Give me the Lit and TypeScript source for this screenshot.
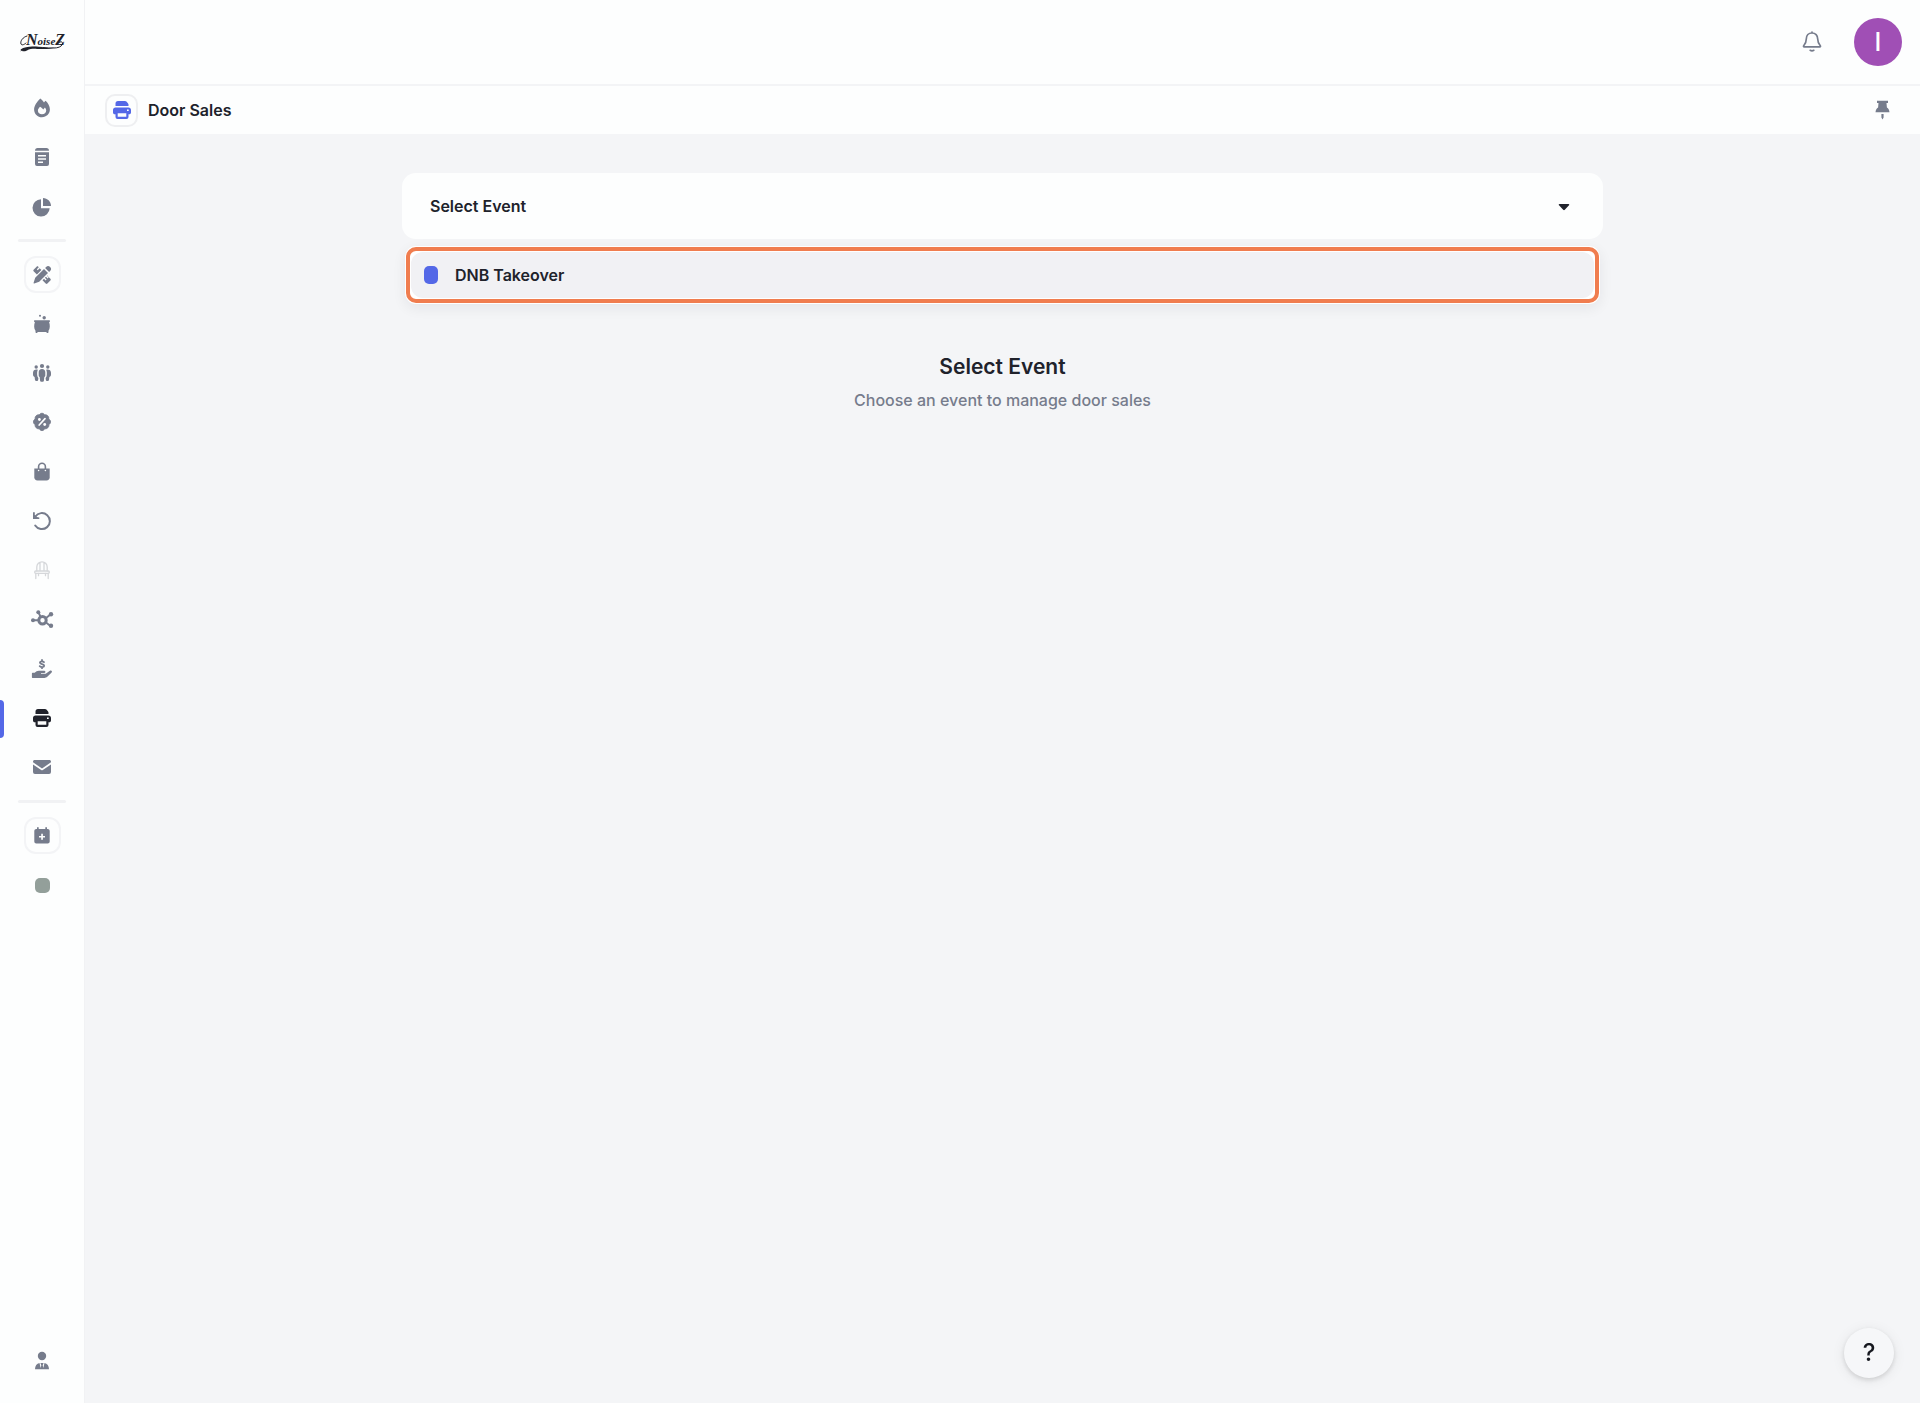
import { LitElement, html, svg, css, nothing, type SVGTemplateResult } from "lit";
import { customElement, property, state } from "lit/decorators.js";
import { classMap } from "lit/directives/class-map.js";

const ICONS: Record<string, SVGTemplateResult> = {
  flame: svg`<path fill="currentColor" fill-rule="evenodd" d="M8.300.5C10 1.700 11.200 3 12 4.600c.500-.800 1-1.400 1.600-1.800C16 5 17.900 8.300 17.900 11.300c0 4.500-3.500 7.900-7.900 7.900s-7.900-3.400-7.900-7.800C2.100 8 5 3.700 8.300.5ZM8 8.800C6.800 10 5.900 11.300 5.900 12.700c0 2.200 1.800 3.600 4.100 3.600 2.400 0 4.200-1.500 4.200-3.700 0-1.200-.5-2.200-1.300-3.100l-1.600 2C10.500 10.500 9.200 9.500 8 8.800Z"/>`,
  doc: svg`<path fill="currentColor" d="M5.500 1h9c1.500 0 2.500 1 2.500 2.800H3C3 2 4 1 5.500 1Z"/><path fill="currentColor" fill-rule="evenodd" d="M3 5.300h14V17a2 2 0 0 1-2 2H5a2 2 0 0 1-2-2V5.300ZM6 8v1.500h8V8H6Zm0 3.200v1.500h8v-1.500H6Zm0 3.200v1.500h5v-1.500H6Z"/>`,
  pie: svg`<path fill="currentColor" d="M9 2.300v9h8.700A8.600 8.600 0 1 1 9 2.300Z"/><path fill="currentColor" d="M11 .9c4.400.1 7.900 3.500 8 8H11V.9Z"/>`,
  tools: svg`<path fill="currentColor" d="m12 4 4 4-8.800 8.800-5 1.600a.5.500 0 0 1-.6-.6l1.600-5L12 4ZM13.100 2.900l1-1a2.800 2.800 0 0 1 4 4l-1 1-4-4Z"/><path fill="currentColor" d="m1.600 4.700 3-3c.5-.5 1.200-.5 1.700 0l.5.600-2 2 .9.900 2-2L9.400 4.900 4.900 9.400 1.600 6.300c-.5-.5-.5-1.100 0-1.600ZM15.100 10.600l3.300 3.200c.5.500.5 1.200 0 1.700l-3 3c-.5.500-1.200.5-1.700 0l-3.200-3.300 1.500-1.500 1.700 1.700.9-.9-1.700-1.700 1.100-1.100 1.700 1.700.9-.9-1.700-1.700 1.200-.2Z"/>`,
  pot: svg`<circle fill="currentColor" cx="8" cy="1.700" r="1"/><circle fill="currentColor" cx="12.200" cy="3.700" r="1.700"/><path fill="currentColor" d="M2.600 6.200h14.800c.8 0 .8 1.700 0 1.700h-.3c1.100 3.500 1 6.500-.6 8.900v1.500c0 .9-2.100.9-2.100 0v-.4H5.600v.4c0 .9-2.100.9-2.100 0v-1.500c-1.600-2.400-1.700-5.400-.6-8.900h-.3c-.8 0-.8-1.700 0-1.700Z"/>`,
  people: svg`<g fill="currentColor"><circle cx="10" cy="3" r="2.100"/><circle cx="4.200" cy="4" r="1.700"/><circle cx="15.800" cy="4" r="1.700"/><path d="M10 6c2.200 0 3.300 1.500 3.300 3.300v3.200c0 .8-.5 1.300-1 1.600l-.4 3.600c-.1.700-.5 1-1.100 1H9.200c-.6 0-1-.3-1.100-1l-.4-3.600c-.5-.3-1-.8-1-1.600V9.300C6.700 7.500 7.800 6 10 6Z"/><path d="M5.800 6.800C5 8.600 5 11 5.400 13.300c.2.800.9 1.400 1 2l-.3 1.900c-.1.500-.4.700-.9.700H3.900c-.5 0-.8-.3-.9-.8l-.4-3C1.400 13.500 1 12.700 1 11.500V9.800C1 7.300 3.300 6 5.800 6.800ZM14.200 6.800c.8 1.800.8 4.200.4 6.500-.2.800-.9 1.400-1 2l.3 1.900c.1.500.4.700.9.700h1.300c.5 0 .8-.3.900-.8l.4-3c1.200-.6 1.600-1.400 1.600-2.600V9.800c0-2.500-2.300-3.800-4.800-3Z"/></g>`,
  percent: svg`<path fill="currentColor" stroke="currentColor" stroke-width="1" stroke-linejoin="round" d="M10 1.300c1.200 0 2.100.8 2.700 1.600 1-.2 2.200.1 3 .9.900.9 1.200 2 1 3.100.9.700 1.800 1.600 1.800 2.900s-.8 2.300-1.700 2.900c.2 1.100-.1 2.200-1 3-.8.9-1.900 1.200-3 1-.6.900-1.500 1.800-2.800 1.800s-2.200-.9-2.800-1.800c-1.100.2-2.200-.1-3-1-.9-.8-1.200-1.900-1-3-.9-.6-1.700-1.600-1.700-2.900s.8-2.200 1.700-2.900c-.2-1.100.1-2.200 1-3.100.8-.8 2-1.100 3-.9.600-.8 1.600-1.600 2.800-1.600Z"/><path stroke="#fff" stroke-width="1.700" stroke-linecap="round" d="m7.200 13 5.800-6.300"/><circle fill="#fff" cx="7.400" cy="7.500" r="1.400"/><circle fill="#fff" cx="12.700" cy="12.500" r="1.400"/>`,
  bag: svg`<path fill="none" stroke="currentColor" stroke-width="1.600" d="M6.600 8V4.700a3.400 3.400 0 0 1 6.800 0V8"/><path fill="currentColor" d="M2.300 6.500h15.400v8.800c0 1.900-1.200 3.200-3.200 3.200h-9c-2 0-3.200-1.300-3.200-3.200V6.500Z"/><circle fill="#fff" cx="6.600" cy="8.500" r=".8"/><circle fill="#fff" cx="13.400" cy="8.500" r=".8"/>`,
  undo: svg`<path fill="none" stroke="currentColor" stroke-width="2" stroke-linecap="round" d="M3.300 5.500A8 8 0 1 1 3.200 14.500"/><path fill="currentColor" d="M1 1.300h1.800v2.800L5 6.100l2.300.3v1.500H1V1.300Z"/>`,
  chair: svg`<g fill="none" stroke="currentColor" stroke-width="1.300" stroke-linecap="round"><path d="M4.800 11V7a5.200 5.200 0 0 1 10.400 0V11M8 10.500V2.500M12 10.500V2.500M3.800 13.500v5M16.200 13.500v5M6.500 13.500v2.200M13.500 13.500v2.200"/><rect x="2.700" y="11" width="14.600" height="2.300" rx="1"/></g>`,
  nodes: svg`<g fill="none" stroke="currentColor"><circle cx="10.500" cy="10.300" r="3.700" stroke-width="3"/><path stroke-width="1.900" d="M7 10.300H1M8.700 7 6.500 2.500M14 8l4.500-3.500M14 12.500l4.500 3.500"/></g><g fill="currentColor"><circle cx="1" cy="10.300" r="2"/><circle cx="6.300" cy="2.200" r="2"/><circle cx="19" cy="4.300" r="2.200"/><circle cx="19" cy="15.800" r="2.200"/></g>`,
  hand: svg`<path fill="none" stroke="currentColor" stroke-width="1.800" stroke-linecap="round" d="M12 3.200C10.800 1.900 7.900 2 7.900 3.600c0 1.900 4.300 1.100 4.300 3.100 0 1.700-3 1.800-4.500.4M10 .9v1M10 8.200v1"/><path fill="currentColor" d="M.5 13.800h2.200c1.200-1.300 2.500-2 4.200-2h5.200c1.800 0 1.800 2.300 0 2.300H9v.7h4.700l4.200-3c1.500-1 2.900.7 1.500 2l-4.100 4c-.9.800-1.700 1.100-2.900 1.100H.5a.6.600 0 0 1-.6-.6v-3.900c0-.4.200-.6.600-.6Z"/>`,
  printer: svg`<path fill="currentColor" d="M6 1h7c.6 0 1 .2 1.400.6l1.500 1.600c.4.400.6.900.6 1.400V6h-13V3.500A2.500 2.500 0 0 1 6 1Z"/><path fill="currentColor" fill-rule="evenodd" d="M3.500 7.500h13c1.500 0 2.500 1 2.500 2.500v2.500c0 1-.8 1.800-1.800 1.800h-.7V17a2 2 0 0 1-2 2h-9a2 2 0 0 1-2-2v-2.700h-.7c-1 0-1.800-.8-1.800-1.800V10c0-1.500 1-2.500 2.500-2.500ZM5.700 13.300v3.500h8.600v-3.500H5.700ZM15 9.500v1.600h1.700V9.500H15Z"/>`,
  mail: svg`<path fill="currentColor" d="M1 4.700C1 3.700 1.700 3 2.700 3h14.600c1 0 1.700.7 1.700 1.700v.6l-9 6.100-9-6.100v-.6Z"/><path fill="currentColor" d="m1 7.400 8.200 5.500c.5.300 1.100.3 1.600 0L19 7.400V15a2 2 0 0 1-2 2H3a2 2 0 0 1-2-2V7.400Z"/>`,
  calendar: svg`<path fill="currentColor" fill-rule="evenodd" d="M5 1.300h1.700V3h6.600V1.300H15V3h.7c1.100 0 2 .9 2 2v10.500c0 1.100-.9 2-2 2H4.300c-1.100 0-2-.9-2-2V5c0-1.100.9-2 2-2H5V1.300Zm4.200 6.400v2.200H7v1.700h2.200v2.200h1.700v-2.200H13V9.900h-2.100V7.700H9.200Z"/>`,
  user: svg`<circle fill="currentColor" cx="10" cy="5" r="4.200"/><path fill="currentColor" d="M3 18.300c0-3.600 1.700-6 4.500-6.400l1.200 5.100.6-2.800-.9-2.300h3.200l-.9 2.300.6 2.800 1.200-5.100c2.800.4 4.500 2.800 4.500 6.400H3Z"/>`,
  bell: svg`<path fill="none" stroke="currentColor" stroke-width="1.700" stroke-linejoin="round" stroke-linecap="round" d="M10 1V0M10 1c-3.400 0-5.700 2.500-5.700 6 0 3.200-.9 4.800-2.600 6.700-.4.500-.2 1.200.5 1.200h15.600c.7 0 .9-.7.500-1.200-1.700-1.900-2.600-3.500-2.600-6.700 0-3.500-2.300-6-5.700-6ZM8.200 18.300c1 .6 2.600.6 3.600 0"/>`,
  pin: svg`<path fill="currentColor" d="M5 .7h11V3h-1.500l.4 4.500c1.500.8 2.300 2.200 2.600 4.800h-14c.3-2.600 1.100-4 2.600-4.800L6.500 3H5V.7ZM9.400 14h2.200v3.500l-1.100 2-1.100-2V14Z"/>`,
};

@customElement("ui-icon")
export class UiIcon extends LitElement {
  @property() name = "";

  static styles = css`
    :host { display: block; width: 20px; height: 20px; }
    .glyph { display: block; width: 100%; height: 100%; overflow: visible; }
  `;

  render() {
    return html`<svg class="glyph" viewBox="0 0 20 20" fill="none" aria-hidden="true">${ICONS[this.name] ?? nothing}</svg>`;
  }
}

interface NavItem {
  icon: string;
  label: string;
  boxed?: boolean;
  muted?: boolean;
}

const TOP: NavItem[] = [
  { icon: "flame", label: "Trending" },
  { icon: "doc", label: "Reports" },
  { icon: "pie", label: "Analytics" },
];

const MIDDLE: NavItem[] = [
  { icon: "tools", label: "Tools", boxed: true },
  { icon: "pot", label: "Pools" },
  { icon: "people", label: "Guests" },
  { icon: "percent", label: "Discounts" },
  { icon: "bag", label: "Shop" },
  { icon: "undo", label: "Refunds" },
  { icon: "chair", label: "Seating", muted: true },
  { icon: "nodes", label: "Integrations" },
  { icon: "hand", label: "Payouts" },
  { icon: "printer", label: "Door Sales" },
  { icon: "mail", label: "Messages" },
];

@customElement("side-nav")
export class SideNav extends LitElement {
  @property() current = "Door Sales";

  static styles = css`
    :host {
      display: flex;
      flex-direction: column;
      align-items: center;
      background: #fdfefe;
      border-right: 1px solid #f1f2f4;
      box-sizing: border-box;
      color: #767c8c;
    }
    .brand { display: block; margin: 28px 0 33px; width: 46px; height: 28px; }
    .logo { display: block; width: 46px; height: 28px; overflow: visible; }
    .logo-name { font: italic 700 11px "Liberation Serif", serif; fill: #20222b; }
    .logo-cap { font-size: 16px; }
    .nav { display: flex; flex: 1; flex-direction: column; align-items: center; width: 100%; }
    .group {
      display: flex;
      flex-direction: column;
      align-items: center;
      justify-content: space-between;
      width: 100%;
      margin: 0;
      padding: 0;
      list-style: none;
    }
    .primary { min-height: 136px; }
    .manage { min-height: 530px; }
    .events { gap: 13px; }
    .rule { width: 48px; height: 3px; margin: 14px 0; border: 0; border-radius: 2px; background: #f1f2f4; }
    .row { display: flex; justify-content: center; position: relative; width: 100%; }
    .link {
      display: flex;
      align-items: center;
      justify-content: center;
      box-sizing: border-box;
      width: 37px;
      height: 37px;
      border-radius: 12px;
      color: inherit;
    }
    .boxed { border: 2px solid #f3f4f6; }
    .muted { color: #d5d7da; }
    .current { color: #20222b; }
    .row-current::before {
      content: "";
      position: absolute;
      left: 0;
      top: 0;
      width: 4px;
      height: 38px;
      border-radius: 0 4px 4px 0;
      background: #5468e7;
    }
    .swatch { width: 15px; height: 15px; border-radius: 5px; background: #939f9a; }
    .account { margin: auto 0 24px; }
  `;

  private item(entry: NavItem) {
    const current = entry.label === this.current;
    return html`<li class=${classMap({ row: true, "row-current": current })}>
      <a
        class=${classMap({ link: true, boxed: !!entry.boxed, muted: !!entry.muted, current })}
        href="#"
        aria-label=${entry.label}
        aria-current=${current ? "page" : nothing}
      ><ui-icon name=${entry.icon}></ui-icon></a>
    </li>`;
  }

  render() {
    return html`
      <a class="brand" href="#" aria-label="NoiseZ">
        <svg class="logo" viewBox="0 0 46 28" aria-hidden="true">
          <text class="logo-name" x="7" y="17"><tspan class="logo-cap">N</tspan>oise<tspan class="logo-cap">Z</tspan></text>
          <g fill="none" stroke="#20222b" stroke-linecap="round">
            <path stroke-width="1" d="M8 8C4 9 1 13 2 16c1 2 4 0 5-1M38 16c3-3 6-3 5.500 0-1 3-5 4-8.500 4-7 .5-16-1.800-24-.5"/>
          </g>
          <path fill="#20222b" d="M1.500 21.500C7 18 14 18 22 19.300c5 .6 10 .8 14 .3-6 1.900-12 1.500-18 1.300-4-.2-7 0-10 1.500-2.500 1-4.500 1.400-5 0l-1.500 1 .5-1.500-.5-.4Z"/>
        </svg>
      </a>
      <nav class="nav" aria-label="Main">
        <ul class="group primary">${TOP.map((entry) => this.item(entry))}</ul>
        <hr class="rule" />
        <ul class="group manage">${MIDDLE.map((entry) => this.item(entry))}</ul>
        <hr class="rule" />
        <ul class="group events">
          ${this.item({ icon: "calendar", label: "New event", boxed: true })}
          <li class="row"><a class="link" href="#" aria-label="Event"><span class="swatch"></span></a></li>
        </ul>
        <a class="link account" href="#" aria-label="Account"><ui-icon name="user"></ui-icon></a>
      </nav>
    `;
  }
}

@customElement("event-picker")
export class EventPicker extends LitElement {
  @state() private open = true;

  static styles = css`
    :host { display: block; position: relative; color: #20222b; }
    .field { display: block; position: relative; }
    .select {
      appearance: none;
      display: block;
      box-sizing: border-box;
      width: 100%;
      height: 66px;
      padding: 0 56px 0 28px;
      border: 0;
      border-radius: 14px;
      background: #fdfefe;
      color: inherit;
      font: 600 16px/24px Inter, sans-serif;
    }
    .caret { position: absolute; right: 33px; top: 31px; width: 12px; height: 7px; pointer-events: none; }
    .panel {
      position: absolute;
      top: 73px;
      left: 3px;
      right: 3px;
      padding: 1px;
      border-radius: 11px;
      background: #fff;
      box-shadow: 0 4px 14px rgba(32, 34, 43, 0.07);
    }
    .focus { padding: 1px; border: 4px solid #f07d4f; border-radius: 10px; }
    .option {
      display: flex;
      align-items: center;
      gap: 17px;
      box-sizing: border-box;
      width: 100%;
      height: 46px;
      padding: 0 13px;
      border: 0;
      border-radius: 12px;
      background: #f1f1f4;
      color: inherit;
      font: 600 16px/24px Inter, sans-serif;
      text-align: left;
    }
    .mark { width: 14px; height: 18px; border-radius: 5px; background: #5468e7; }
  `;

  render() {
    return html`
      <div class="field">
        <select class="select" aria-label="Select Event" @change=${() => (this.open = false)}>
          <option>Select Event</option>
          <option>DNB Takeover</option>
        </select>
        <svg class="caret" viewBox="0 0 12 7" aria-hidden="true">
          <path fill="#20222b" d="M1.500 0h9c.8 0 1 .8.500 1.300L6.800 5.800c-.5.500-1.100.5-1.600 0L1 1.300C.5.800.7 0 1.500 0Z"/>
        </svg>
      </div>
      ${this.open
        ? html`<div class="panel">
            <div class="focus">
              <button class="option" type="button" @click=${() => (this.open = false)}>
                <span class="mark"></span><span>DNB Takeover</span>
              </button>
            </div>
          </div>`
        : nothing}
    `;
  }
}

@customElement("app-root")
export class AppRoot extends LitElement {
  static styles = css`
    :host {
      display: grid;
      grid-template-columns: 85px minmax(0, 1fr);
      min-height: 100vh;
      background: #f4f5f7;
      color: #20222b;
      font-family: Inter, sans-serif;
    }
    .page { display: flex; flex-direction: column; }
    .top {
      display: flex;
      align-items: center;
      justify-content: flex-end;
      gap: 32px;
      height: 84px;
      padding-right: 18px;
      border-bottom: 2px solid #f3f4f6;
      background: #fdfefe;
    }
    .plain { padding: 0; border: 0; background: none; color: #767c8c; }
    .avatar {
      width: 48px;
      height: 48px;
      padding: 0;
      border: 0;
      border-radius: 50%;
      background: #a04fb5;
      color: #fff;
      font: 500 25px/48px Inter, sans-serif;
    }
    .bar {
      display: flex;
      align-items: center;
      gap: 10px;
      height: 48px;
      padding: 0 28px 0 20px;
      background: #fdfefe;
    }
    .badge {
      display: flex;
      align-items: center;
      justify-content: center;
      box-sizing: border-box;
      width: 33px;
      height: 33px;
      border: 2px solid #eeeff1;
      border-radius: 10px;
      color: #5468e7;
    }
    .heading { flex: 1; margin: 0; font-size: 16px; font-weight: 600; line-height: 24px; }
    .content { padding: 39px 24px; }
    .column { width: 72%; max-width: 1201px; margin: 0 auto; }
    .empty { margin-top: 112px; text-align: center; }
    .title { margin: 0; font-size: 21px; font-weight: 600; line-height: 32px; }
    .hint { margin: 5px 0 0; color: #767c8c; font-size: 16px; font-weight: 500; line-height: 24px; }
    .help {
      position: fixed;
      right: 26px;
      bottom: 25px;
      width: 50px;
      height: 50px;
      padding: 0;
      border: 0;
      border-radius: 50%;
      background: #f6f7f9;
      box-shadow: 0 2px 5px rgba(0, 0, 0, 0.12), 0 2px 14px rgba(0, 0, 0, 0.08);
      color: #16181f;
      font: 500 24px/50px Inter, sans-serif;
    }
  `;

  render() {
    return html`
      <side-nav></side-nav>
      <div class="page">
        <header class="top">
          <button class="plain" type="button" aria-label="Notifications"><ui-icon name="bell"></ui-icon></button>
          <button class="avatar" type="button">I</button>
        </header>
        <div class="bar">
          <span class="badge"><ui-icon name="printer"></ui-icon></span>
          <h1 class="heading">Door Sales</h1>
          <button class="plain" type="button" aria-label="Pin page"><ui-icon name="pin"></ui-icon></button>
        </div>
        <main class="content">
          <div class="column">
            <event-picker></event-picker>
            <section class="empty">
              <h2 class="title">Select Event</h2>
              <p class="hint">Choose an event to manage door sales</p>
            </section>
          </div>
        </main>
      </div>
      <button class="help" type="button">?</button>
    `;
  }
}
